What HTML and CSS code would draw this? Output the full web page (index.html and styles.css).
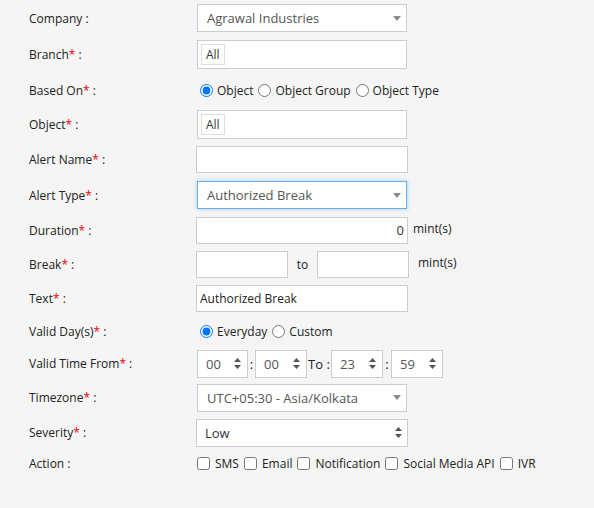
FILE: index.html
```html
<!DOCTYPE html>
<html>
<head>
<meta charset="utf-8">
<link rel="stylesheet" href="styles.css">
</head>
<body>
<form class="form">
  <div class="row r1">
    <div class="label">Company :</div>
    <div class="field"><div class="select w210"><span>Agrawal Industries</span><svg class="caret" width="8" height="5" viewBox="0 0 8 5"><path d="M0 0H8L4 5Z" fill="#8a8a8a"/></svg></div></div>
  </div>
  <div class="row r2">
    <div class="label">Branch<span class="req">*</span> :</div>
    <div class="field"><div class="multi w210"><span class="chip">All</span></div></div>
  </div>
  <div class="row r3">
    <div class="label">Based On<span class="req">*</span> :</div>
    <div class="field choices">
      <label class="opt"><input type="radio" name="based" checked>Object</label>
      <label class="opt"><input type="radio" name="based">Object Group</label>
      <label class="opt"><input type="radio" name="based">Object Type</label>
    </div>
  </div>
  <div class="row r4">
    <div class="label">Object<span class="req">*</span> :</div>
    <div class="field"><div class="multi w210"><span class="chip">All</span></div></div>
  </div>
  <div class="row r5">
    <div class="label">Alert Name<span class="req">*</span> :</div>
    <div class="field"><div class="input w212"></div></div>
  </div>
  <div class="row r6">
    <div class="label">Alert Type<span class="req">*</span> :</div>
    <div class="field"><div class="select w210 focus"><span>Authorized Break</span><svg class="caret" width="8" height="5" viewBox="0 0 8 5"><path d="M0 0H8L4 5Z" fill="#8a8a8a"/></svg></div></div>
  </div>
  <div class="row r7">
    <div class="label">Duration<span class="req">*</span> :</div>
    <div class="field"><div class="input w212 right">0</div><span class="unit u1">mint(s)</span></div>
  </div>
  <div class="row r8">
    <div class="label">Break<span class="req">*</span> :</div>
    <div class="field"><div class="input w92"></div><span class="to">to</span><div class="input w92"></div><span class="unit u2">mint(s)</span></div>
  </div>
  <div class="row r9">
    <div class="label">Text<span class="req">*</span> :</div>
    <div class="field"><div class="input w212 text">Authorized Break</div></div>
  </div>
  <div class="row r10">
    <div class="label">Valid Day(s)<span class="req">*</span> :</div>
    <div class="field choices">
      <label class="opt"><input type="radio" name="day" checked>Everyday</label>
      <label class="opt"><input type="radio" name="day">Custom</label>
    </div>
  </div>
  <div class="row r11">
    <div class="label">Valid Time From<span class="req">*</span> :</div>
    <div class="field">
      <div class="select tsel t1"><span>00</span><svg class="updown" width="7" height="11" viewBox="0 0 7 11"><path d="M0 4H7L3.5 0Z M0 7H7L3.5 11Z" fill="#555"/></svg></div>
      <span class="sep s1">:</span>
      <div class="select tsel t2"><span>00</span><svg class="updown" width="7" height="11" viewBox="0 0 7 11"><path d="M0 4H7L3.5 0Z M0 7H7L3.5 11Z" fill="#555"/></svg></div>
      <span class="sep s2">To :</span>
      <div class="select tsel t2"><span>23</span><svg class="updown" width="7" height="11" viewBox="0 0 7 11"><path d="M0 4H7L3.5 0Z M0 7H7L3.5 11Z" fill="#555"/></svg></div>
      <span class="sep s3">:</span>
      <div class="select tsel t2"><span>59</span><svg class="updown" width="7" height="11" viewBox="0 0 7 11"><path d="M0 4H7L3.5 0Z M0 7H7L3.5 11Z" fill="#555"/></svg></div>
    </div>
  </div>
  <div class="row r12">
    <div class="label">Timezone<span class="req">*</span> :</div>
    <div class="field"><div class="select w210"><span>UTC+05:30 - Asia/Kolkata</span><svg class="caret" width="8" height="5" viewBox="0 0 8 5"><path d="M0 0H8L4 5Z" fill="#8a8a8a"/></svg></div></div>
  </div>
  <div class="row r13">
    <div class="label">Severity<span class="req">*</span> :</div>
    <div class="field"><div class="select w212 sev"><span>Low</span><svg class="updown" width="7" height="11" viewBox="0 0 7 11"><path d="M0 4H7L3.5 0Z M0 7H7L3.5 11Z" fill="#555"/></svg></div></div>
  </div>
  <div class="row r14">
    <div class="label">Action :</div>
    <div class="field checks">
      <label class="chk"><input type="checkbox">SMS</label>
      <label class="chk"><input type="checkbox">Email</label>
      <label class="chk"><input type="checkbox">Notification</label>
      <label class="chk"><input type="checkbox">Social Media API</label>
      <label class="chk"><input type="checkbox">IVR</label>
    </div>
  </div>
</form>
</body>
</html>
```

FILE: styles.css
```css
html, body {
  margin: 0;
  padding: 0;
  background: #f5f5f5;
}
body {
  width: 594px;
  height: 508px;
  font-family: "Open Sans", "Liberation Sans", sans-serif;
  font-size: 12px;
  color: #222;
}
.form {
  display: flex;
  flex-direction: column;
}
.row {
  display: flex;
  align-items: center;
}
.r1 { height: 36px; }
.r2 { height: 37px; }
.r3 { height: 34px; }
.r4 { height: 35px; }
.r5 { height: 35px; }
.r6 { height: 36px; }
.r7 { height: 34px; }
.r8 { height: 34px; }
.r9 { height: 34px; }
.r10 { height: 32px; }
.r11 { height: 33px; }
.r12 { height: 35px; }
.r13 { height: 35px; }
.r14 { height: 26px; }
.label {
  width: 167px;
  padding-left: 29px;
  flex: none;
  white-space: nowrap;
}
.req { color: #e00; }
.field {
  display: flex;
  align-items: center;
}
.select, .input, .multi {
  box-sizing: border-box;
  background: #fff;
  border: 1px solid #ccc;
  height: 28px;
  display: flex;
  align-items: center;
}
.select {
  justify-content: space-between;
  padding: 0 5px 0 9px;
  font-size: 13px;
  color: #555;
}
.w210 { width: 210px; margin-left: 1px; }
.w212 { width: 212px; }
.w92 { width: 92px; }
.multi {
  height: 29px;
  padding: 0 3px;
}
.chip {
  border: 1px solid #ddd;
  padding: 1px 4px;
  line-height: 17px;
  font-size: 12px;
  color: #333;
}
.focus {
  border-color: #66afe9;
  box-shadow: 0 0 4px rgba(102, 175, 233, 0.6);
}
.input { height: 27px; }
.right {
  justify-content: flex-end;
  padding-right: 3px;
  font-size: 13px;
  color: #333;
}
.text {
  padding-left: 3px;
  color: #222;
}
.unit.u1 { margin-left: 5px; margin-top: -3px; }
.unit.u2 { margin-left: 9px; margin-top: -3px; }
.to { width: 29px; text-align: center; }
.choices { margin-left: -1px; }
.opt, .chk {
  display: flex;
  align-items: center;
}
.opt input {
  margin: 0 4px 0 5px;
  width: 13px;
  height: 13px;
}
.checks { padding-left: 1px; }
.chk input {
  margin: 0 5px 0 0;
  width: 13px;
  height: 13px;
}
.chk { margin-right: 5px; }
.tsel {
  height: 28px;
  padding: 0 6px 0 8px;
}
.t1 { width: 51px; margin-left: 1px; }
.t2 { width: 52px; }
.sep { text-align: center; font-size: 13px; }
.sep.s1 { width: 7px; }
.sep.s2 { width: 24px; }
.sep.s3 { width: 8px; }
.sev { padding-left: 8px; padding-right: 5px; color: #333; }
```
